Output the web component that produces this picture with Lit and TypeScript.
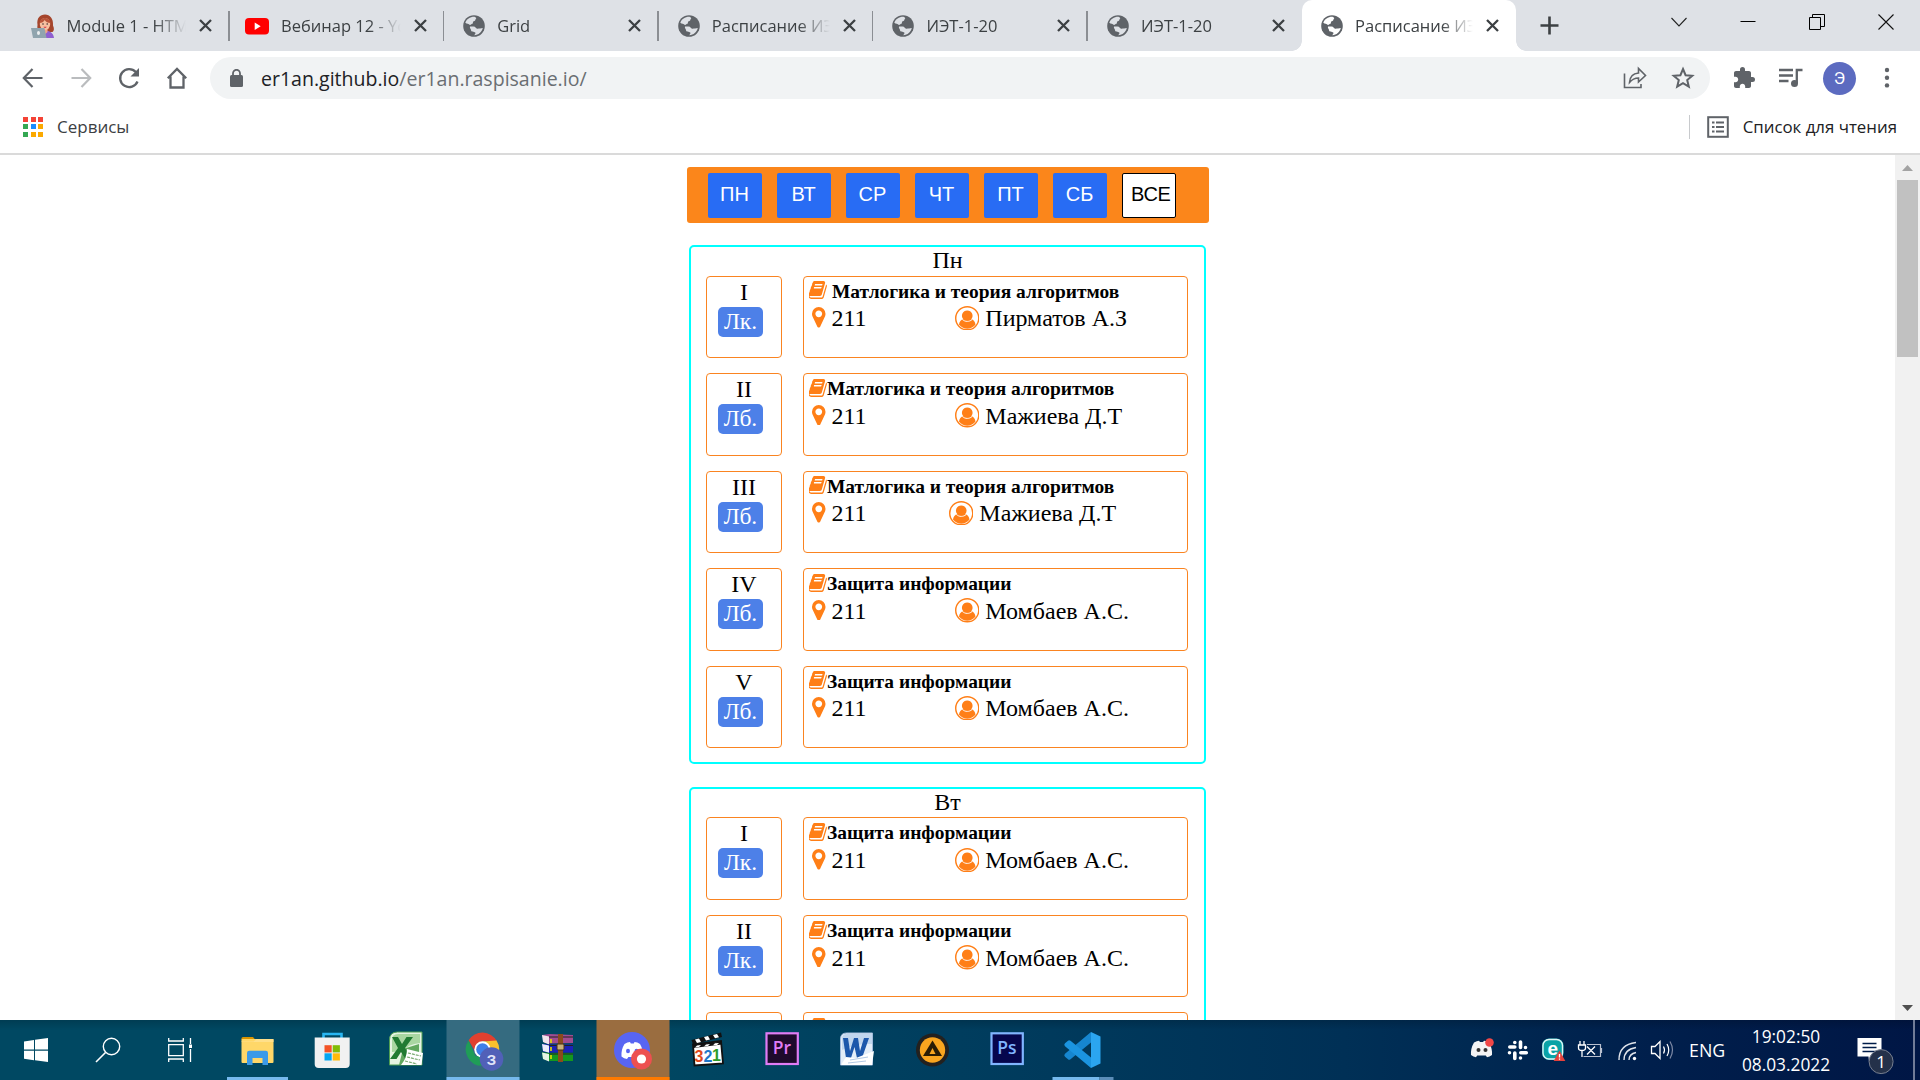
import { LitElement, html, svg, css, type SVGTemplateResult } from "lit";
import { customElement, property } from "lit/decorators.js";
import { classMap } from "lit/directives/class-map.js";

/* ---------- data ---------- */

interface Lesson { num: string; kind: string; subject: string; room: string; teacher: string; spaced?: boolean; shifted?: boolean }
interface Day { name: string; lessons: Lesson[] }

const logic = "Матлогика и теория алгоритмов";
const security = "Защита информации";

const days: Day[] = [
  {
    name: "Пн",
    lessons: [
      { num: "I", kind: "Лк.", subject: logic, room: "211", teacher: "Пирматов А.З", spaced: true },
      { num: "II", kind: "Лб.", subject: logic, room: "211", teacher: "Мажиева Д.Т" },
      { num: "III", kind: "Лб.", subject: logic, room: "211", teacher: "Мажиева Д.Т", shifted: true },
      { num: "IV", kind: "Лб.", subject: security, room: "211", teacher: "Момбаев А.С." },
      { num: "V", kind: "Лб.", subject: security, room: "211", teacher: "Момбаев А.С." },
    ],
  },
  {
    name: "Вт",
    lessons: [
      { num: "I", kind: "Лк.", subject: security, room: "211", teacher: "Момбаев А.С." },
      { num: "II", kind: "Лк.", subject: security, room: "211", teacher: "Момбаев А.С." },
      { num: "III", kind: "Лб.", subject: security, room: "211", teacher: "Момбаев А.С." },
    ],
  },
];

const filters = ["ПН", "ВТ", "СР", "ЧТ", "ПТ", "СБ", "ВСЕ"];

const tabs = [
  { title: "Module 1 - HTM", icon: "woman" },
  { title: "Вебинар 12 - Yo", icon: "youtube" },
  { title: "Grid", icon: "globe" },
  { title: "Расписание ИЭ", icon: "globe" },
  { title: "ИЭТ-1-20", icon: "globe" },
  { title: "ИЭТ-1-20", icon: "globe" },
  { title: "Расписание ИЭ", icon: "globe", active: true },
];

/* ---------- icons ---------- */

const tabIcons: Record<string, SVGTemplateResult> = {
  globe: svg`<circle cx="12" cy="12" r="10.8" fill="#5f6368"/>
    <path fill="#dee1e6" class="land" d="M12.6 2.8C8.3 2.6 4.6 5 3.3 8.8c1.4 1.2 3.6 1 4.6 2.2 1.2-.2 1.6-1.3 3-1.6 0-1.500.1-2 1.600-2.300 1.200-.4.6-1.700 1.500-2.300.700-.5-.3-1.300-1.400-2z"/>
    <path fill="#dee1e6" class="land" d="M8 12.500h3.500c2.200 0 2 2 3.800 2.200 1.800.1 3.500-.6 5.500-.700-1 4-4.200 7-8.500 7.200.4-1 1.600-1.600 1-2.700-1.300-.9-4.300-.2-4.300-2.400 0-1.300-1.600-2-1-3.600z"/>`,
  youtube: svg`<rect x="0" y="4" width="24" height="16.500" rx="4" fill="#f00"/><path d="M9.700 8.500v7.400l6-3.700z" fill="#fff"/>`,
  woman: svg`<g transform="translate(-1 0)"><path d="M7.500 11C6.500 4 10 .5 15 .5s8.500 4 8 11c1.500 3 1 5.500-.5 6.500h-13c-2-2-2.500-4-2-7z" fill="#a5452c"/>
    <path d="M9 24c0-5 3-7.500 6-7.500s8.500 1.500 9 7.500z" fill="#8f5fd0"/>
    <path d="M13 14h4.500v4l-2.200 2-2.300-2z" fill="#f0a788"/>
    <ellipse cx="15" cy="10" rx="5.200" ry="6" fill="#f7c0a0"/>
    <path d="M9.500 9c1-4 3.500-5 5.500-5s5 1.500 5.700 5c-3 0-5-1-6-3-1 2-3 3-5.200 3z" fill="#b9553a"/>
    <circle cx="13" cy="10" r=".8" fill="#423030"/><circle cx="17.200" cy="10" r=".8" fill="#423030"/><path d="M13.500 12.800h3.200c-.5 1.500-2.700 1.500-3.200 0z" fill="#d02c40"/>
    <path d="M1 14h13.500l2 10H3z" fill="#90a4ae"/><ellipse cx="8.500" cy="19" rx="1.500" ry="2" fill="#eceff1"/></g>`,
};

const bookPath = "M1639 478q40 57 18 129l-275 906q-19 64-76.5 107.5t-122.5 43.5h-923q-77 0-148.5-53.5t-99.5-131.5q-24-67-2-127 0-4 3-27t4-37q1-8-3-21.500t-3-19.500q2-11 8-21t16.500-23.500 16.500-23.500q23-38 45-91.500t30-91.500q3-10 .5-30t-.5-28q3-11 17-28t17-23q21-36 42-92t25-90q1-9-2.500-32t.5-28q4-13 22-30.500t22-22.500q19-26 42.500-84.500t27.500-96.500q1-8-3-25.500t-2-26.500q2-8 9-18t18-23 17-21q8-12 16.500-30.500t15-35 16-36 19.500-32 26.500-23.500 36-11.500 47.500 5.500l-1 3q38-9 51-9h761q74 0 114 56t18 130l-274 906q-36 119-71.500 153.500t-128.500 34.500h-869q-27 0-38 15-11 16-1 43 24 70 144 70h923q29 0 56-15.500t35-41.500l300-987q7-22 5-57 38 15 59 43zm-1064 2q-4 13 2 22.500t20 9.500h608q13 0 25.500-9.500t16.500-22.500l21-64q4-13-2-22.500t-20-9.500h-608q-13 0-25.500 9.500t-16.500 22.500zm-83 256q-4 13 2 22.500t20 9.500h608q13 0 25.500-9.500t16.500-22.500l21-64q4-13-2-22.500t-20-9.500h-608q-13 0-25.500 9.500t-16.500 22.500z";
const pinPath = "M1152 640q0-106-75-181t-181-75-181 75-75 181 75 181 181 75 181-75 75-181zm256 0q0 109-33 179l-364 774q-16 33-47.500 52t-67.500 19-67.500-19-46.500-52l-365-774q-33-70-33-179 0-212 150-362t362-150 362 150 150 362z";

const bookIcon = html`<svg class="book" viewBox="60 128 1612 1540" preserveAspectRatio="none"><path fill="#ff7f17" d=${bookPath}/></svg>`;
const pinIcon = html`<svg class="pin" viewBox="384 128 1024 1536" preserveAspectRatio="none"><path fill="#ff7f17" d=${pinPath}/></svg>`;
const userIcon = html`<svg class="user" viewBox="0 0 24 24">
  <circle cx="12" cy="12" r="11.300" fill="none" stroke="#ff7f17" stroke-width="1.400"/>
  <path fill="#ff7f17" d="M12 4.300a5.200 5.200 0 0 1 3.800 8.700c2.500.4 3.800 2.400 4.300 5.200A10.300 10.300 0 0 1 12 22.300a10.300 10.300 0 0 1-8.100-4.100c.5-2.800 1.800-4.800 4.300-5.200A5.200 5.200 0 0 1 12 4.300z"/>
  <path fill="none" stroke="#fff" stroke-width=".9" d="M7.300 13.300c2.800 2.400 6.600 2.400 9.400 0"/>
</svg>`;

/* Taskbar tiles use a 75x60 canvas, one per pinned program. */
const apps: { art: SVGTemplateResult; state?: string }[] = [
  { state: "run", art: svg`<path d="M21.500 18.500a1.500 1.500 0 0 1 1.500-1.500h10l2.500 3h-14z" fill="#d99400"/>
      <rect x="21.500" y="19" width="32" height="24" rx="1" fill="#ffd768"/><path d="M21.500 21.500h12l3-2.500h17v3h-32z" fill="#ffe08a"/>
      <path d="M27 45V33a2.200 2.200 0 0 1 2.200-2.200h16.600A2.200 2.200 0 0 1 48 33v12h-5.500v-7h-10v7z" fill="#3b9ae8"/>` },
  { art: svg`<path d="M28.500 20v-6h18v6" fill="none" stroke="#29b6f2" stroke-width="2.600"/>
      <path d="M19.700 17.500h35V44a4 4 0 0 1-4 4h-27a4 4 0 0 1-4-4z" fill="#f1f1f1"/>
      <path d="M29.500 25.200h7.200v7.200h-7.200z" fill="#f35325"/><path d="M37.700 25.200h7.200v7.200h-7.200z" fill="#81bc06"/><path d="M29.500 33.300h7.200v7.200h-7.200z" fill="#05a6f0"/><path d="M37.700 33.300h7.200v7.200h-7.200z" fill="#ffba08"/>` },
  { art: svg`<path d="M19.500 45V20q0-8 8-8H52v33z" fill="#e5f3e2" stroke="#4f9e52"/><path d="M22 32V20q0-6 6-6h22v9q-12 1-17 8z" fill="#a9d6a1"/>
      <path d="M33 29l16-5v21H29z" fill="#62a85f"/>
      <path d="M22 17h6l4 7 4.500-7H43l-8 11 7 11h-6.500L31 32l-4.500 7H20l8-11z" fill="#217a32"/>
      <path d="M37 29l16 4-1.500 12H31q6-7 6-16z" fill="#fff"/><path d="M38 33l13 3M37 37l13 3M35 41l12 3" stroke="#7bab72" stroke-width="1.200" stroke-dasharray="3 1"/>` },
  { state: "on", art: svg`<path d="M23.600 20.300A16.300 16.300 0 0 1 51.700 21H37.500l-7 11z" fill="#e0402f"/>
      <path d="M51.500 20.500a16.300 16.300 0 0 1-14.500 25l7.500-13-7-11z" fill="#fbc02d"/><path d="M23.500 20.500a16.300 16.300 0 0 0 14 25.300l6-10.500-13 1z" fill="#1f9d57"/>
      <circle cx="37.500" cy="29.500" r="8.200" fill="#fff"/><circle cx="37.500" cy="29.500" r="6.300" fill="#3f7fe8"/>
      <circle cx="46.500" cy="39" r="11.800" fill="#5160b8"/><text x="46.500" y="44.500" class="b">З</text>` },
  { art: svg`<path d="M22 15l7-1 24 1v8l-24 .5-5-1z" fill="#a04c90"/><path d="M22 15l7 1.500v8L23 22z" fill="#f1e5ec"/>
      <path d="M22 24l7 .5h24v8H29l-6-1z" fill="#1c22b8"/><path d="M22 24l7 1.500v7.300l-6-1.800z" fill="#eceefa"/>
      <path d="M22 32.500l7 .5h24v8H29l-6-2z" fill="#14981e"/><path d="M22 32.500l7 1.500v7.500l-6-2.500z" fill="#e6f5e6"/>
      <path d="M29 17h24M29 25.500h24M29 34h24" stroke="#222" stroke-width="1"/><path d="M31 19v4M31 27v4M31 35v4" stroke="#e5e000" stroke-width="1.600"/>
      <path d="M38 14h5v28h-5z" fill="#8a4a1c"/><rect x="37" y="24" width="7" height="6" rx="1" fill="#c9b27a" stroke="#473016"/>` },
  { state: "alert", art: svg`<circle cx="37" cy="30" r="18" fill="#5865f2"/>
      <path d="M29.500 24q3-2 5.500-2l.8 1.500h3L39.500 22q3 .2 5.500 2 3.500 6 3 12.500-2.500 2-5.500 2.500l-1.300-2h-7.800L32 39q-3-.5-5.500-2.500-.5-7 3-12.500z" fill="#fff"/>
      <ellipse cx="33" cy="31" rx="2" ry="2.300" fill="#5865f2"/><ellipse cx="41.500" cy="31" rx="2" ry="2.300" fill="#5865f2"/>
      <circle cx="46.500" cy="39" r="10.500" fill="#ed5050"/><circle cx="46.500" cy="39" r="4.600" fill="#fff"/>` },
  { art: svg`<path d="M23 24.500 51 21l2 22.500-28.500 2z" fill="#fff" stroke="#111" stroke-width="1.800"/>
      <path d="M21.500 20 51 12.500l1 4.500-29 7.500z" fill="#111"/><path d="M25 19.500l4-1 2 3.500-4 1zM34 17l4-1 2 3.500-4 1zM43 15l4-1 2 3.200-4 1z" fill="#fff"/>
      <path d="M23 24.700 52 21.500v3L23.500 28z" fill="#111"/><path d="M27 25.600l4-.5-2 2-4 .5zM36 24.500l4-.5-2 2-4 .5zM45 23.300l4-.3-2 2-4 .3z" fill="#fff"/>
      <text x="24.500" y="42" class="n" fill="#e2481a">3</text><text x="33.500" y="41.500" class="n" fill="#1f76c9">2</text><text x="42" y="41" class="n" fill="#2c9c27">1</text>` },
  { art: svg`<rect x="21.500" y="13.300" width="31.300" height="30.700" fill="#1f0a2c" stroke="#e07cf5" stroke-width="2.200"/><text x="37" y="34" class="ad" fill="#e07cf5">Pr</text>` },
  { art: svg`<path d="M20.500 45V19q0-6 6-6h26v32z" fill="#e3edf8" stroke="#9fb9da"/><path d="M22 30V19q0-5 5-5h25v10q-16-1-30 6z" fill="#c1d6ee"/>
      <path d="M23 18h5l2 13 4-13h4l2 13 4-13h5l-7 20h-5l-2.500-11L31 38h-5z" fill="#1c57ab"/><path d="M36 38l18-7-2 14H21l5-8z" fill="#fff"/><path d="M30 40l18-3M28 43l18-2" stroke="#b3c9e4"/>` },
  { art: svg`<circle cx="37.500" cy="30" r="16.500" fill="#23211f"/><circle cx="37.500" cy="30" r="12.700" fill="#f9a51f"/><path d="M37.500 20.500 47 36h-19z" fill="#2a1c05"/><path d="M37.500 28l3 6h-6z" fill="#f9a51f"/>` },
  { art: svg`<rect x="21.500" y="13.300" width="31.300" height="30.700" fill="#06064d" stroke="#80b5ff" stroke-width="2.200"/><text x="37" y="34" class="ad" fill="#80b5ff">Ps</text>` },
  { state: "stack", art: svg`<path d="M46 12l9.500 4.500v27L46 48z" fill="#2ba5f0"/><path d="M46 12v10.500L25.500 39.300q-1.500 1-2.500 0L20 36.800q-1.500-1.500 0-3z" fill="#1686d0"/>
      <path d="M46 48V37.500L25.500 20.700q-1.500-1-2.500 0L20 23.200q-1.500 1.500 0 3z" fill="#1b94e0"/>` },
];

/* ---------- schedule page ---------- */

@customElement("lesson-row")
class LessonRow extends LitElement {
  @property({ attribute: false }) lesson!: Lesson;

  static styles = css`
    :host { display: flex; gap: 21px; height: 82.500px; font: 24px/27px "Liberation Serif", "Times New Roman", serif; color: #000; }
    .slot, .info { border: 1px solid #fa8421; border-radius: 4px; box-sizing: border-box; }
    .slot { width: 76px; text-align: center; }
    .num { height: 30px; line-height: 31px; }
    .kind { width: 45px; height: 30px; margin-left: 11px; line-height: 29px; border-radius: 5px; background: #4d80e8; color: #fff; font-size: 23.500px; }
    .info { width: 385px; padding: 4px 5px 0; }
    .subject { display: flex; height: 24.800px; font-size: 19.460px; font-weight: bold; line-height: 22px; white-space: pre; }
    .subject.spaced { gap: 5px; }
    .book { width: 18px; height: 18px; margin-top: .8px; flex: none; }
    .meta { display: flex; height: 27px; }
    .pin { width: 13.500px; height: 20.500px; margin: 2px 6px 0 3px; }
    .room { width: 123.300px; line-height: 26px; letter-spacing: -.1px; }
    .shifted .room { width: 117.300px; }
    .user { width: 24.500px; height: 24.500px; margin: .5px 6px 0 0; }
    .teacher { line-height: 26px; white-space: pre; }
  `;

  render() {
    const l = this.lesson;
    return html`
      <div class="slot"><div class="num">${l.num}</div><div class="kind">${l.kind}</div></div>
      <div class="info">
        <div class=${classMap({ subject: true, spaced: !!l.spaced })}>${bookIcon}<span>${l.subject}</span></div>
        <div class=${classMap({ meta: true, shifted: !!l.shifted })}>${pinIcon}<span class="room">${l.room}</span>${userIcon}<span class="teacher">${l.teacher}</span></div>
      </div>`;
  }
}

@customElement("schedule-page")
class SchedulePage extends LitElement {
  static styles = css`
    :host { display: flex; height: 865px; background: #fff; overflow: hidden; }
    .page { flex: 1; min-width: 0; display: flex; flex-direction: column; align-items: center; padding-top: 12px; }
    .filters { display: flex; gap: 15px; box-sizing: border-box; width: 522px; height: 56px; padding: 6px 0 0 21px; background: #fb861b; border-radius: 3px; margin-bottom: 22px; flex: none; }
    .filter { display: block; box-sizing: border-box; width: 54px; height: 45px; padding: 0 0 2px; border: 0; border-radius: 2px; background: #286cf4; color: #fff; font: 20px/43px "Liberation Sans", Arial, sans-serif; text-align: center; }
    .filter.all { border: 1px solid #000; background: #fff; color: #000; padding-left: 8.500px; text-align: left; line-height: 41px; letter-spacing: -.3px; }
    .day { box-sizing: border-box; width: 517px; border: 2px solid #0ff; border-radius: 5px; padding: 0 15px 14px; margin-bottom: 22.500px; flex: none; }
    .title { height: 28.700px; font: 24px/27px "Liberation Serif", "Times New Roman", serif; text-align: center; }
    .rows { display: flex; flex-direction: column; gap: 15px; }
    .bar { width: 25px; background: #f1f1f1; display: flex; flex-direction: column; align-items: center; justify-content: space-between; flex: none; }
    .top { display: flex; flex-direction: column; align-items: center; }
    .arrow { width: 25px; height: 25px; }
    .thumb { width: 21px; height: 177px; background: #c1c1c1; }
  `;

  render() {
    return html`
      <div class="page">
        <div class="filters">${filters.map(f => html`<button class=${classMap({ filter: true, all: f === "ВСЕ" })}>${f}</button>`)}</div>
        ${days.map(d => html`<section class="day"><div class="title">${d.name}</div>
          <div class="rows">${d.lessons.map(l => html`<lesson-row .lesson=${l}></lesson-row>`)}</div></section>`)}
      </div>
      <div class="bar">
        <div class="top"><svg class="arrow" viewBox="0 0 25 25"><path d="M7 16h11l-5.500-6z" fill="#a3a3a3"/></svg><div class="thumb"></div></div>
        <svg class="arrow" viewBox="0 0 25 25"><path d="M7 10h11l-5.500 6z" fill="#505050"/></svg>
      </div>`;
  }
}

/* ---------- browser chrome ---------- */

@customElement("browser-chrome")
class BrowserChrome extends LitElement {
  static styles = css`
    :host { display: block; height: 155px; background: #fff; font-family: "Open Sans", "Noto Sans", sans-serif; color: #3c4043; }
    svg { flex: none; display: block; }
    .tabs { display: flex; height: 51px; padding-left: 14.500px; background: #dee1e6; }
    .tab { display: flex; align-items: center; box-sizing: border-box; width: 214.600px; height: 51px; padding: 0 17px 0 16px; position: relative; }
    .tab.active { background: #fff; border-radius: 10px 10px 0 0; margin: 0 0 0 -.5px; }
    .tab.active .land { fill: #fff; }
    .tab.active::before, .tab.active::after { content: ""; position: absolute; bottom: 0; width: 10px; height: 10px; }
    .tab.active::before { left: -10px; background: radial-gradient(circle at 0 0, transparent 9.500px, #fff 10px); }
    .tab.active::after { right: -10px; background: radial-gradient(circle at 100% 0, transparent 9.500px, #fff 10px); }
    .fav { width: 24px; height: 24px; margin-right: 12px; }
    .fav.globe { margin: 0 11px 0 2.500px; }
    .name { flex: 1; min-width: 0; overflow: hidden; white-space: nowrap; font-size: 16.500px; line-height: 24px; margin-right: 13px; -webkit-mask-image: linear-gradient(90deg, #000 calc(100% - 32px), transparent); }
    .close { width: 13px; height: 13px; }
    .sep { width: 1.500px; height: 30px; background: #8b8e93; position: absolute; right: -.5px; top: 11px; }
    .plus { margin: 16px 0 0 24px; width: 19px; height: 19px; }
    .win { margin-left: auto; display: flex; height: 43px; align-items: center; gap: 53px; padding-right: 26.500px; }
    .toolbar { display: flex; align-items: center; height: 54px; padding-left: 21px; box-sizing: border-box; }
    .nav { width: 24px; height: 24px; margin-right: 24px; }
    .omni { display: flex; align-items: center; box-sizing: border-box; width: 1500px; height: 42px; margin-left: -3px; border-radius: 21px; background: #f1f3f4; padding: 0 15px 0 20px; }
    .url { font-size: 19.550px; line-height: 28px; margin-left: 18px; padding-top: 1px; flex: 1; color: #6a6e72; white-space: nowrap; }
    .host { color: #202124; }
    .share { margin-right: 24px; }
    .tools { display: flex; align-items: center; margin-left: 21.500px; }
    .queue { margin-left: 22.500px; }
    .avatar { width: 33px; height: 33px; border-radius: 50%; background: #5c6bc0; color: #fff; font: 17px/33px Roboto, sans-serif; text-align: center; margin: 0 28px 0 20px; }
    .marks { display: flex; align-items: center; height: 48px; padding: 0 23px; }
    .label { font-size: 17px; line-height: 24px; margin-top: -5px; }
    .reading .label { font-size: 16.850px; }
    .grid { display: grid; grid-template-columns: repeat(3, 5px); gap: 2.500px; margin: -5px 14px 0 0; }
    .grid i { height: 5px; }
    .r { background: #f44336; } .g { background: #34a853; } .b { background: #1a8cff; } .y { background: #fba900; }
    .reading { margin-left: auto; display: flex; align-items: center; color: #202124; white-space: nowrap; }
    .bar { width: 1px; height: 24px; background: #c8cacd; margin: -5px 17px 0 0; }
    .list { margin: -5px 14px 0 0; }
    .line { height: 2px; background: #dadada; }
  `;

  render() {
    return html`
      <div class="tabs">
        ${tabs.map((t, i) => html`<div class=${classMap({ tab: true, active: !!t.active })}>
          <svg class=${classMap({ fav: true, globe: t.icon === "globe" })} viewBox="0 0 24 24">${tabIcons[t.icon]}</svg>
          <span class="name">${t.title}</span>
          <svg class="close" viewBox="0 0 13 13"><path d="M1 1l11 11M12 1L1 12" stroke="#3c4043" stroke-width="2.300"/></svg>
          ${i < 5 ? html`<span class="sep"></span>` : ""}
        </div>`)}
        <svg class="plus" viewBox="0 0 19 19"><path d="M9.500.5v18M.5 9.500h18" stroke="#3c4043" stroke-width="2.600"/></svg>
        <div class="win">
          <svg width="16" height="16" viewBox="0 0 16 16"><path d="M.5 4l7.500 8 7.500-8" fill="none" stroke="#222" stroke-width="1.100"/></svg>
          <svg width="16" height="16" viewBox="0 0 16 16"><path d="M.5 7.500h15" stroke="#000"/></svg>
          <svg width="16" height="16" viewBox="0 0 16 16"><path d="M.5 3.500h11v12H.5zM3.500 3.500v-3h12v12h-4" fill="none" stroke="#000"/></svg>
          <svg width="16" height="16" viewBox="0 0 16 16"><path d="M.5.5l15 15M15.500.5l-15 15" stroke="#111" stroke-width="1.100"/></svg>
        </div>
      </div>
      <div class="toolbar">
        <svg class="nav" viewBox="0 0 24 24"><path d="M21.500 12H3M11.500 3L2.800 12l8.700 9" fill="none" stroke="#5f6368" stroke-width="2.200"/></svg>
        <svg class="nav" viewBox="0 0 24 24"><path d="M2.500 12H21M12.500 3l8.700 9-8.700 9" fill="none" stroke="#babcbe" stroke-width="2.200"/></svg>
        <svg class="nav" viewBox="0 0 24 24"><path d="M20.500 15.500A9 9 0 1 1 18.800 6l2 2.500" fill="none" stroke="#5f6368" stroke-width="2.300"/><path d="M22 2v8.500h-8.500z" fill="#5f6368"/></svg>
        <svg class="nav" viewBox="0 0 24 24"><path d="M2.800 12.300L12 3l9.200 9.300M5.500 10.500v11h13v-11" fill="none" stroke="#5f6368" stroke-width="2.300"/></svg>
        <div class="omni">
          <svg width="13" height="18" viewBox="0 0 13 18"><rect x="0" y="6" width="13" height="12" rx="1.500" fill="#5f6368"/><path d="M3 7V4.300a3.500 3.500 0 0 1 7 0V7" fill="none" stroke="#5f6368" stroke-width="1.800"/></svg>
          <span class="url"><span class="host">er1an.github.io</span>/er1an.raspisanie.io/</span>
          <svg class="share" width="24" height="24" viewBox="0 0 24 24"><path d="M1.500 7.500V21.500H18v-3.500" fill="none" stroke="#5f6368" stroke-width="1.600"/><path d="M6.500 16.500c.3-5.500 3-9 9-9.500V2.500L22.500 9.500 15.500 16v-4c-4 0-6.500 1.500-9 4.500z" fill="none" stroke="#5f6368" stroke-width="1.600"/></svg>
          <svg width="24" height="24" viewBox="0 0 24 24"><path d="M12 3l2.600 6.200 6.700.5-5.100 4.400 1.600 6.500L12 17.100l-5.800 3.500 1.600-6.500-5.100-4.400 6.700-.5z" fill="none" stroke="#5f6368" stroke-width="2"/></svg>
        </div>
        <div class="tools">
          <svg width="24" height="24" viewBox="0 0 24 24"><path fill="#5f6368" d="M20.500 11H19V7c0-1.100-.9-2-2-2h-4V3.500a2.500 2.500 0 0 0-5 0V5H4c-1.100 0-1.990.9-1.990 2v3.800H3.500c1.490 0 2.700 1.210 2.700 2.700s-1.210 2.700-2.700 2.700H2V20c0 1.100.9 2 2 2h3.800v-1.500c0-1.490 1.210-2.700 2.700-2.700s2.700 1.210 2.700 2.700V22H17c1.100 0 2-.9 2-2v-4h1.500a2.500 2.500 0 0 0 0-5z"/></svg>
          <svg width="25" height="22" viewBox="0 0 25 22" class="queue"><path d="M1 3h14M1 8.500h14M1 14h9.500" stroke="#5f6368" stroke-width="2.300"/><path d="M18.800 16V3h5.700" fill="none" stroke="#5f6368" stroke-width="2.300"/><circle cx="16.500" cy="16.500" r="3.500" fill="#5f6368"/></svg>
          <div class="avatar">Э</div>
          <svg width="6" height="22" viewBox="0 0 6 22"><g fill="#5f6368"><circle cx="3" cy="3" r="2.200"/><circle cx="3" cy="10.700" r="2.200"/><circle cx="3" cy="18.400" r="2.200"/></g></svg>
        </div>
      </div>
      <div class="marks">
        <div class="grid">${["r", "r", "r", "g", "b", "y", "g", "y", "y"].map(c => html`<i class=${c}></i>`)}</div>
        <span class="label">Сервисы</span>
        <div class="reading"><span class="bar"></span>
          <svg class="list" width="22" height="22" viewBox="0 0 22 22"><rect x="1.200" y="1.200" width="19.600" height="19.600" fill="none" stroke="#5f6368" stroke-width="2"/><path d="M5 6.500h2.500M5 11h2.500M5 15.500h2.500M9 6.500h8M9 11h8M9 15.500h8" stroke="#5f6368" stroke-width="2"/></svg>
          <span class="label">Список для чтения</span></div>
      </div>
      <div class="line"></div>`;
  }
}

/* ---------- taskbar ---------- */

@customElement("task-bar")
class TaskBar extends LitElement {
  static styles = css`
    :host { display: flex; height: 60px; background: linear-gradient(180deg, rgba(0,0,0,.16), transparent 10px), linear-gradient(90deg, #004862 0, #004862 32%, #003d5e 50%, #003056 70%, #001f4c 86%, #001645); color: #fff; font-family: "Open Sans", "Noto Sans", sans-serif; }
    svg { display: block; flex: none; }
    .apps { display: flex; margin-left: 3.500px; }
    .app { width: 75px; height: 60px; }
    .b { font: bold 15px "Liberation Sans", sans-serif; fill: #e0e4f8; text-anchor: middle; }
    .n { font: bold 16px "Liberation Sans", sans-serif; }
    .ad { font: 600 17.500px "Open Sans", sans-serif; text-anchor: middle; }
    .tray { margin-left: auto; display: flex; align-items: center; }
    .lang { width: 36px; font-size: 17.800px; line-height: 24px; margin-left: 12px; }
    .clock { width: 90px; text-align: center; font-size: 17.300px; line-height: 28px; margin: 0 22px 0 16px; padding-top: 2px; white-space: nowrap; }
    .badge { font: 17px "Open Sans", sans-serif; fill: #fff; text-anchor: middle; }
    .edge { width: 1.500px; height: 60px; background: #707c98; margin-right: 5.500px; }
  `;

  private underline(state?: string) {
    if (state === "run") return svg`<rect x="7" y="57" width="61" height="3" fill="#76b9ed"/>`;
    if (state === "stack") return svg`<rect x="7.500" y="57" width="47" height="3" fill="#76b9ed"/><rect x="54.500" y="57" width="14" height="3" fill="#5b8db8"/>`;
    if (state === "on") return svg`<rect x="1.500" y="0" width="73" height="60" fill="#356b80"/><rect x="1.500" y="57" width="73" height="3" fill="#76b9ed"/>`;
    if (state === "alert") return svg`<rect x="1.500" y="0" width="73" height="60" fill="#9a6d40"/><rect x="1.500" y="57" width="73" height="3" fill="#ff7a00"/>`;
    return svg``;
  }

  render() {
    return html`
      <svg width="72" height="60" viewBox="0 0 72 60"><path d="M24 21.500l10-1.500v9.500H24zM35 19.800l13-1.800v11.500H35zM24 30.700h10v9.500l-10-1.400zM35 30.700h13V42l-13-1.800z" fill="#fff"/></svg>
      <svg width="72" height="60" viewBox="0 0 72 60"><circle cx="39.500" cy="26.500" r="8.200" fill="none" stroke="#fff" stroke-width="1.400"/><path d="M33.500 32.500L24 42" stroke="#fff" stroke-width="1.600"/></svg>
      <svg width="72" height="60" viewBox="0 0 72 60"><path d="M24.700 18v3h14.600v-3M24.700 24.700h14.600v11H24.700zM24.700 42v-3h14.600v3M46.500 18v6M46.500 29v13" fill="none" stroke="#fff" stroke-width="1.300"/><path d="M45 24.500h3v3.500h-3z" fill="#fff"/></svg>
      <div class="apps">${apps.map(a => html`<svg class="app" viewBox="0 0 75 60">${this.underline(a.state)}${a.art}</svg>`)}</div>
      <div class="tray">
        <svg width="210" height="60" viewBox="1468 0 210 60">
          <path d="M1475 22.500q3-1.800 5-1.800l1 1.300h3l1-1.300q3 0 5 1.800 3.500 6 3 12.500-2.500 2-5 2.300l-1.200-1.800h-8.600l-1.200 1.800q-2.500-.3-5-2.300-.5-6.500 3-12.500z" fill="#f4f4f4"/><circle cx="1479.500" cy="30" r="2" fill="#333"/><circle cx="1486.500" cy="30" r="2" fill="#333"/><circle cx="1490.500" cy="22.500" r="4.300" fill="#f04747"/>
          <g stroke="#fff" stroke-width="3.600" stroke-linecap="round"><path d="M1515.800 22.500v0M1515.800 27h-5M1521.500 22v5.500M1526.500 27.500v0M1521.800 32.800h5.500M1521.500 38v0M1515.800 33v5.500M1510.500 32.800v0"/></g>
          <rect x="1543" y="18.500" width="21.500" height="21.500" rx="7" fill="#0aa3a6"/><rect x="1544" y="19.500" width="19.500" height="19.500" rx="6" fill="none" stroke="#dff6f6" stroke-width="1.400"/><text x="1553.700" y="35" font-family="Liberation Sans, sans-serif" font-weight="bold" font-size="19" fill="#fff" text-anchor="middle">e</text>
          <path d="M1560.500 30.500l5.800 10.500h-11.600z" fill="#e5413c"/><path d="M1560.500 34v3.500M1560.500 38.500v1.200" stroke="#fff" stroke-width="1.300"/>
          <path d="M1588 24.500h13.500v12h-17M1602.500 28v5" fill="none" stroke="#b9c0cf" stroke-width="1.200"/><path d="M1581 21v4M1585 21v4M1579.500 25h7v3q0 2.500-3.500 2.500t-3.500-2.500zM1583 30.500v6.500M1588 26.500l8 8M1596 26.500l-8 8" fill="none" stroke="#fff" stroke-width="1.300"/>
          <path d="M1620 40q0-15.500 17-17.500M1625 40q0-10.500 12-12.500M1630 40q0-6 7-7.500" fill="none" stroke="#dfe3ea" stroke-width="1.400"/><circle cx="1635.500" cy="38.500" r="1.700" fill="#fff"/>
          <path d="M1652.500 26.500h3.500l5-5v17l-5-5h-3.500z" fill="none" stroke="#fff" stroke-width="1.300"/><path d="M1664.500 26.500q2 3.500 0 7M1668 24q3.500 6 0 12" fill="none" stroke="#fff" stroke-width="1.200"/><path d="M1671 21.500q5 8.500 0 17" fill="none" stroke="#7d89a5" stroke-width="1.200"/>
        </svg>
        <span class="lang">ENG</span>
        <div class="clock"><div>19:02:50</div><div>08.03.2022</div></div>
        <svg width="60" height="60" viewBox="1853.500 0 60 60"><path d="M1858 18h24v18.500h-8.500l-4 5.500-.5-5.500h-11z" fill="#fff"/><path d="M1863 23.500h14M1863 27.500h14M1863 31.500h14" stroke="#001c49" stroke-width="1.300"/><circle cx="1881.600" cy="41.600" r="12" fill="#24314a" stroke="#777f8f" stroke-width="1"/><text x="1881.600" y="48" class="badge">1</text></svg>
        <span class="edge"></span>
      </div>`;
  }
}

@customElement("app-root")
class AppRoot extends LitElement {
  static styles = css`
    :host { display: block; width: 1920px; height: 1080px; overflow: hidden; background: #fff; }
  `;

  render() {
    return html`<browser-chrome></browser-chrome><schedule-page></schedule-page><task-bar></task-bar>`;
  }
}
